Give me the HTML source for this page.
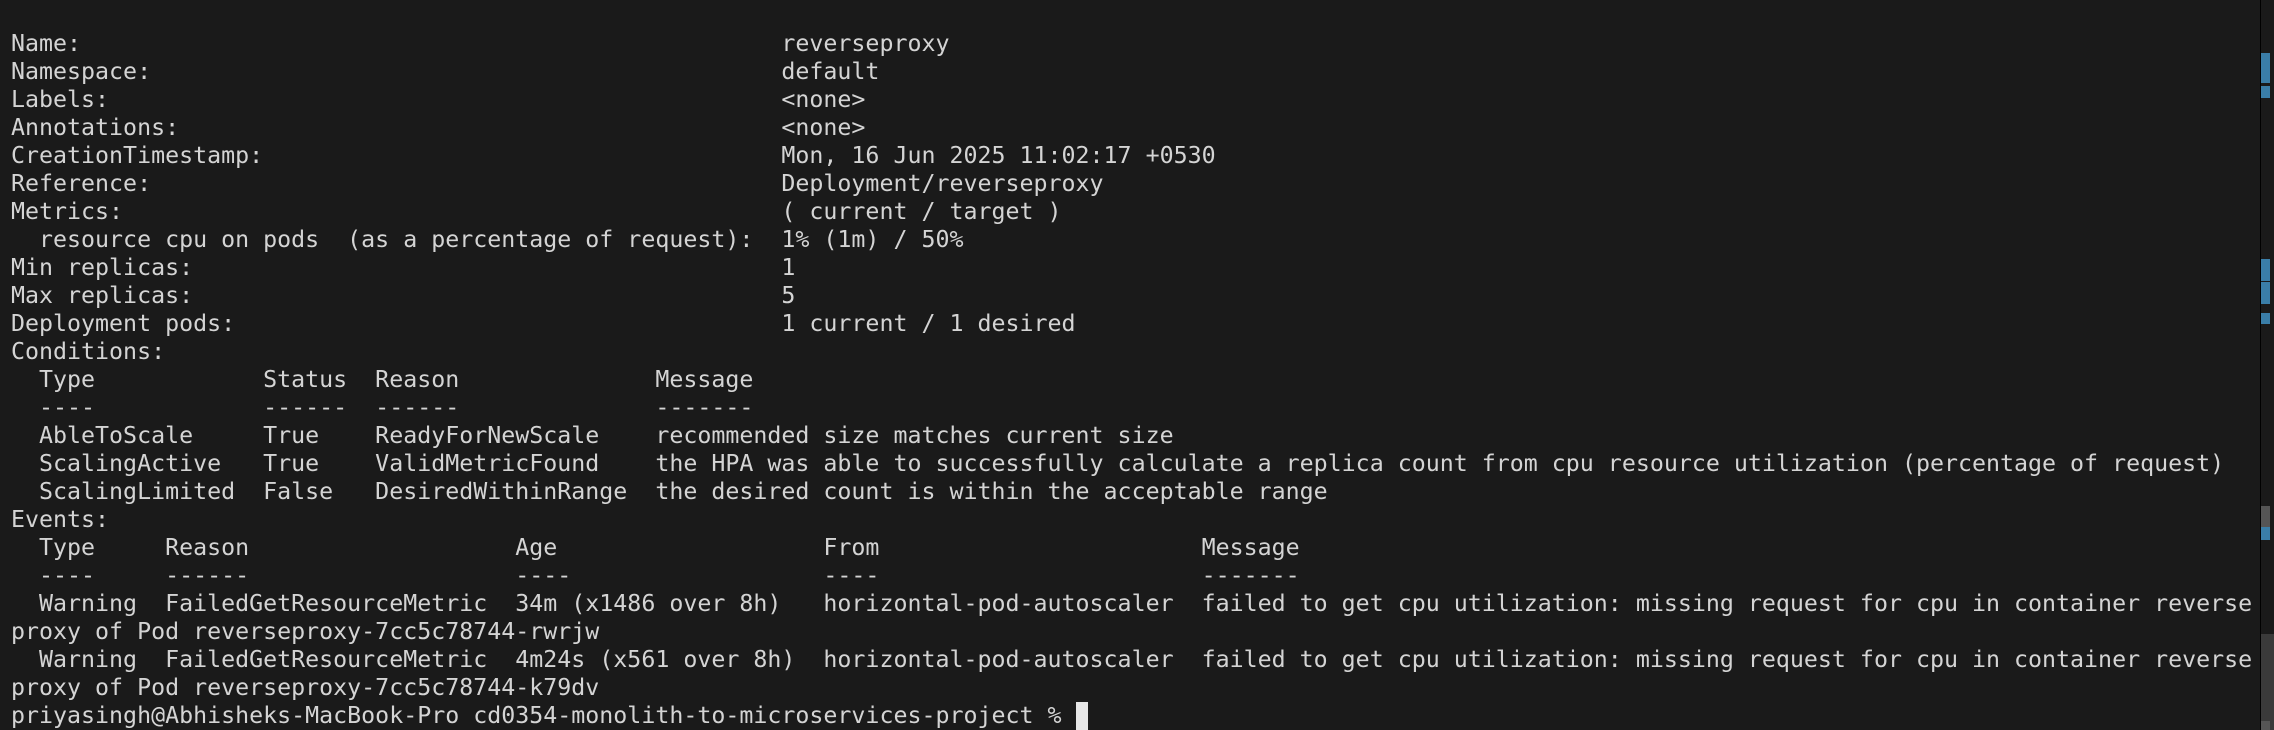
<!DOCTYPE html>
<html><head><meta charset="utf-8"><style>
html,body{margin:0;padding:0;background:#1a1a1a;width:2274px;height:730px;overflow:hidden;}
pre{margin:0;position:absolute;left:11px;top:30px;font-family:"DejaVu Sans Mono","Liberation Mono",monospace;font-size:23.27px;line-height:28px;color:#d4d4d4;}
.cur{display:inline-block;width:12px;height:28px;background:#e6e6e6;vertical-align:top;}
.sb{position:absolute;left:2260px;top:0;width:1px;height:730px;background:#000;}
.m{position:absolute;left:2261px;width:9px;background:#3a7ea8;}
</style></head><body>
<pre>Name:                                                  reverseproxy
Namespace:                                             default
Labels:                                                &lt;none&gt;
Annotations:                                           &lt;none&gt;
CreationTimestamp:                                     Mon, 16 Jun 2025 11:02:17 +0530
Reference:                                             Deployment/reverseproxy
Metrics:                                               ( current / target )
  resource cpu on pods  (as a percentage of request):  1% (1m) / 50%
Min replicas:                                          1
Max replicas:                                          5
Deployment pods:                                       1 current / 1 desired
Conditions:
  Type            Status  Reason              Message
  ----            ------  ------              -------
  AbleToScale     True    ReadyForNewScale    recommended size matches current size
  ScalingActive   True    ValidMetricFound    the HPA was able to successfully calculate a replica count from cpu resource utilization (percentage of request)
  ScalingLimited  False   DesiredWithinRange  the desired count is within the acceptable range
Events:
  Type     Reason                   Age                   From                       Message
  ----     ------                   ----                  ----                       -------
  Warning  FailedGetResourceMetric  34m (x1486 over 8h)   horizontal-pod-autoscaler  failed to get cpu utilization: missing request for cpu in container reverse
proxy of Pod reverseproxy-7cc5c78744-rwrjw
  Warning  FailedGetResourceMetric  4m24s (x561 over 8h)  horizontal-pod-autoscaler  failed to get cpu utilization: missing request for cpu in container reverse
proxy of Pod reverseproxy-7cc5c78744-k79dv
priyasingh@Abhisheks-MacBook-Pro cd0354-monolith-to-microservices-project % <span class="cur"></span></pre>
<div class="sb"></div>
<div class="m" style="top:53px;height:30px"></div>
<div class="m" style="top:86px;height:12px"></div>
<div class="m" style="top:259px;height:22px"></div>
<div class="m" style="top:282px;height:22px"></div>
<div class="m" style="top:313px;height:11px"></div>
<div class="m" style="top:506px;height:21px;background:#555"></div>
<div class="m" style="top:527px;height:13px"></div>
<div style="position:absolute;left:2261px;top:634px;width:13px;height:96px;background:#3a3a3a"></div>
<div style="position:absolute;left:2261px;top:721px;width:9px;height:9px;background:#555"></div>
</body></html>
